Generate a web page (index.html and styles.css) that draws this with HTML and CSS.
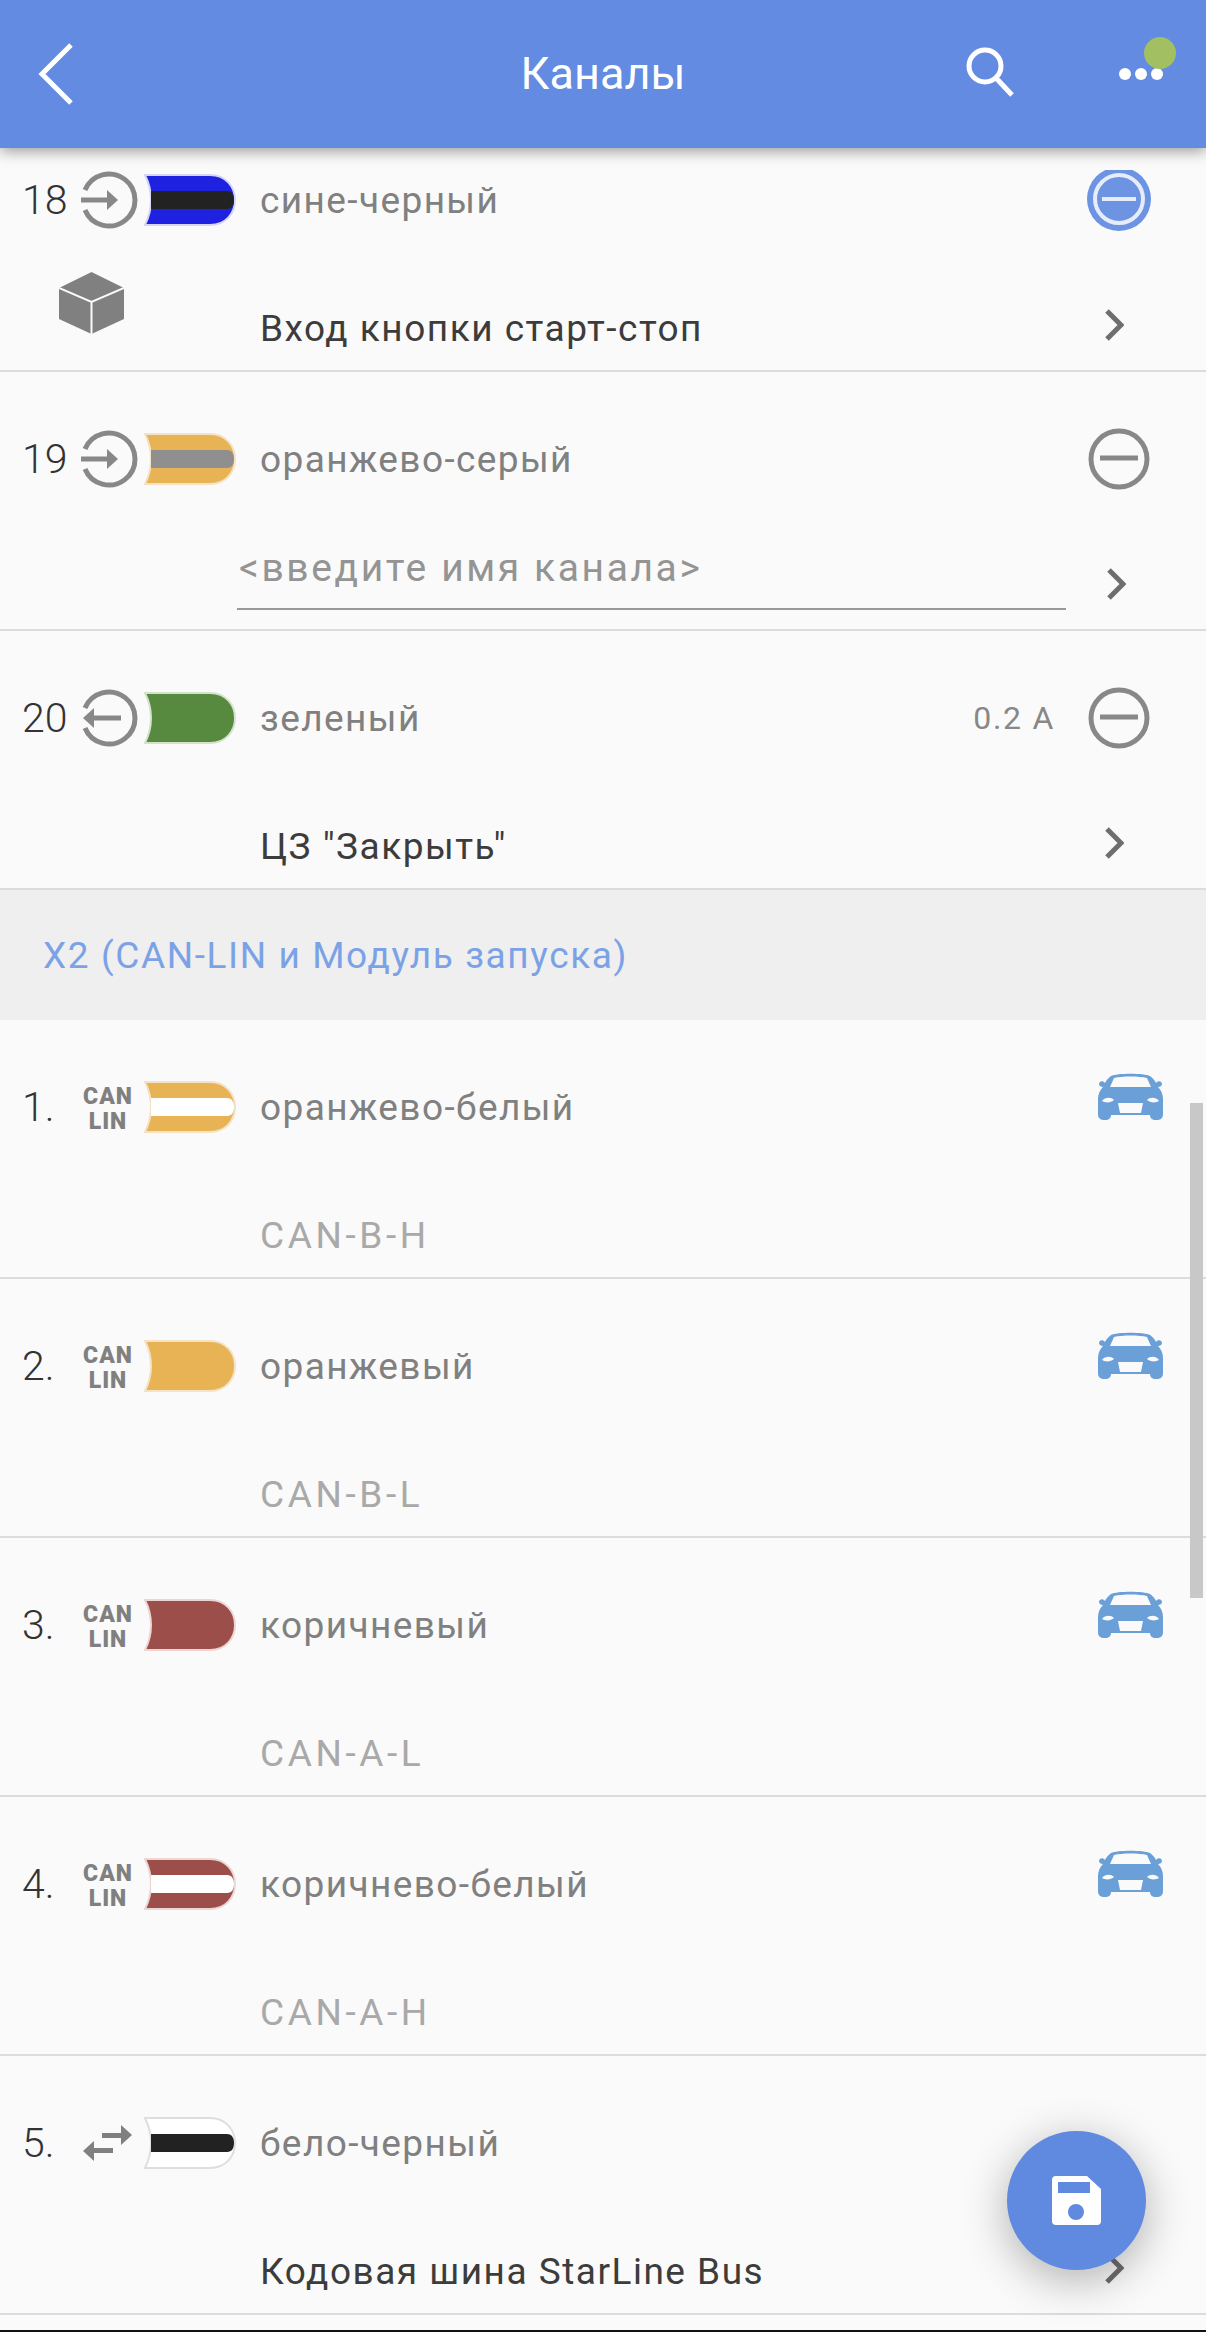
FILE: index.html
```html
<!DOCTYPE html>
<html lang="ru">
<head>
  <meta charset="UTF-8">
  <title>Каналы</title>
  <link rel="stylesheet" href="styles.css">
</head>
<body>
  <!-- shared icons -->
  <svg class="defs" aria-hidden="true">
    <symbol id="wire" viewBox="0 0 92 54">
      <path class="wire-body" d="M1 2H66C82 2 91 14 91 27C91 40 82 52 66 52H1C5 44 7 36 7 27C7 18 5 10 1 2Z"/>
    </symbol>
    <symbol id="stripe" viewBox="0 0 92 54">
      <path class="wire-stripe" d="M7 18H83C88 18 90 22 90 27C90 32 88 36 83 36H7Z"/>
    </symbol>
    <symbol id="in" viewBox="0 0 58 58">
      <path class="line" d="M4 19A26 26 0 1 1 4 39"/>
      <path class="line" d="M0 29H30"/>
      <path class="fill" d="M26 19L37 29L26 39Z"/>
    </symbol>
    <symbol id="out" viewBox="0 0 58 58">
      <path class="line" d="M4 19A26 26 0 1 1 4 39"/>
      <path class="line" d="M10 29H40"/>
      <path class="fill" d="M13 19L2 29L13 39Z"/>
    </symbol>
    <symbol id="minus" viewBox="0 0 62 62">
      <circle class="line" cx="31" cy="31" r="28"/>
      <path class="line" d="M12 30H50"/>
    </symbol>
    <symbol id="next" viewBox="0 0 20 32">
      <path class="next-line" d="M3 2L17 16L3 30"/>
    </symbol>
    <symbol id="car" viewBox="0 0 65 47">
      <path class="car-body" d="M13 3C19 0 46 0 52 3C55 5 57 8 58 10C60 7 64 8 64 11C64 13 62 14 60 14C63 17 65 21 65 26V41C65 45 63 47 58 47C54 47 52 45 52 42H13C13 45 11 47 7 47C2 47 0 45 0 41V26C0 21 2 17 5 14C3 14 1 13 1 11C1 8 5 7 7 10C8 8 10 5 13 3Z"/>
      <path class="car-glass" d="M16 5C24 3 41 3 49 5L53 14H12Z"/>
      <path class="car-glass" d="M4 28C7 24 13 24 16 27C13 30 7 30 4 28Z"/>
      <path class="car-glass" d="M61 28C58 24 52 24 49 27C52 30 58 30 61 28Z"/>
      <path class="car-glass" d="M20 30H45L43 40H22Z"/>
    </symbol>
  </svg>

  <div class="page">
    <header class="topbar">
      <div class="bar-left">
        <svg class="back" viewBox="0 0 36 62"><path d="M33 2L4 31L33 60"/></svg>
      </div>
      <div class="title">Каналы</div>
      <div class="bar-right">
        <svg class="search" viewBox="0 0 48 50"><circle cx="19" cy="19" r="16"/><path d="M30 31L46 48"/></svg>
        <div class="more">
          <span class="more-dot"></span>
          <span class="more-dot"></span>
          <span class="more-dot"></span>
        </div>
      </div>
      <span class="online"></span>
    </header>

    <main class="list">
      <div class="row row-first">
        <div class="row-top">
          <div class="num">18.</div>
          <svg class="dir"><use href="#in"/></svg>
          <svg class="wire blue-black"><use href="#wire"/><use href="#stripe"/></svg>
          <div class="color">сине-черный</div>
          <svg class="minus-on" viewBox="0 3 64 61">
            <circle class="on-bg" cx="32" cy="32" r="32"/>
            <circle class="on-ring" cx="32" cy="32" r="24"/>
            <path class="on-ring" d="M15 32H49"/>
          </svg>
        </div>
        <div class="row-bottom">
          <div class="side">
            <svg class="cube" viewBox="0 0 65 62">
              <path class="cube-body" d="M32.5 0L65 16V47L32.5 62L0 47V16Z"/>
              <path class="cube-line" d="M0 16L32.5 30L65 16M32.5 30V62"/>
            </svg>
          </div>
          <div class="name">Вход кнопки старт-стоп</div>
          <svg class="next"><use href="#next"/></svg>
        </div>
      </div>

      <div class="row">
        <div class="row-top">
          <div class="num">19.</div>
          <svg class="dir"><use href="#in"/></svg>
          <svg class="wire orange-grey"><use href="#wire"/><use href="#stripe"/></svg>
          <div class="color">оранжево-серый</div>
          <svg class="minus"><use href="#minus"/></svg>
        </div>
        <div class="row-bottom">
          <div class="side"></div>
          <input class="channel-input" type="text" placeholder="<введите имя канала>">
          <svg class="next"><use href="#next"/></svg>
        </div>
      </div>

      <div class="row">
        <div class="row-top">
          <div class="num">20.</div>
          <svg class="dir"><use href="#out"/></svg>
          <svg class="wire green"><use href="#wire"/></svg>
          <div class="color">зеленый</div>
          <div class="amps">0.2 A</div>
          <svg class="minus"><use href="#minus"/></svg>
        </div>
        <div class="row-bottom">
          <div class="side"></div>
          <div class="name">ЦЗ "Закрыть"</div>
          <svg class="next"><use href="#next"/></svg>
        </div>
      </div>

      <div class="section">X2 (CAN-LIN и Модуль запуска)</div>

      <div class="row">
        <div class="row-top">
          <div class="num">1.</div>
          <div class="bus">CAN<br>LIN</div>
          <svg class="wire orange-white"><use href="#wire"/><use href="#stripe"/></svg>
          <div class="color">оранжево-белый</div>
          <svg class="car"><use href="#car"/></svg>
        </div>
        <div class="row-bottom">
          <div class="side"></div>
          <div class="name muted">CAN-B-H</div>
        </div>
      </div>

      <div class="row">
        <div class="row-top">
          <div class="num">2.</div>
          <div class="bus">CAN<br>LIN</div>
          <svg class="wire orange"><use href="#wire"/></svg>
          <div class="color">оранжевый</div>
          <svg class="car"><use href="#car"/></svg>
        </div>
        <div class="row-bottom">
          <div class="side"></div>
          <div class="name muted">CAN-B-L</div>
        </div>
      </div>

      <div class="row">
        <div class="row-top">
          <div class="num">3.</div>
          <div class="bus">CAN<br>LIN</div>
          <svg class="wire brown"><use href="#wire"/></svg>
          <div class="color">коричневый</div>
          <svg class="car"><use href="#car"/></svg>
        </div>
        <div class="row-bottom">
          <div class="side"></div>
          <div class="name muted">CAN-A-L</div>
        </div>
      </div>

      <div class="row">
        <div class="row-top">
          <div class="num">4.</div>
          <div class="bus">CAN<br>LIN</div>
          <svg class="wire brown-white"><use href="#wire"/><use href="#stripe"/></svg>
          <div class="color">коричнево-белый</div>
          <svg class="car"><use href="#car"/></svg>
        </div>
        <div class="row-bottom">
          <div class="side"></div>
          <div class="name muted">CAN-A-H</div>
        </div>
      </div>

      <div class="row">
        <div class="row-top">
          <div class="num">5.</div>
          <svg class="swap" viewBox="0 0 50 36">
            <path d="M19 8H38V0L49 10L38 20V13H19Z"/>
            <path d="M30 23H11V16L0 26L11 36V28H30Z"/>
          </svg>
          <svg class="wire white-black"><use href="#wire"/><use href="#stripe"/></svg>
          <div class="color">бело-черный</div>
        </div>
        <div class="row-bottom">
          <div class="side"></div>
          <div class="name">Кодовая шина StarLine Bus</div>
          <svg class="next"><use href="#next"/></svg>
        </div>
      </div>
    </main>

    <div class="scrollbar"></div>

    <button class="fab">
      <svg class="save" viewBox="0 0 49 49">
        <path class="save-body" d="M4 0H35L49 13V45A4 4 0 0 1 45 49H4A4 4 0 0 1 0 45V4A4 4 0 0 1 4 0Z"/>
        <rect class="save-hole" x="6" y="6" width="32" height="11"/>
        <circle class="save-hole" cx="24" cy="36" r="8"/>
      </svg>
    </button>
  </div>
</body>
</html>
```

FILE: styles.css
```css
* {
  box-sizing: border-box;
}
body {
  margin: 0;
  background: #fafafa;
  font-family: Roboto, "Noto Sans", sans-serif;
}
.defs {
  position: absolute;
  width: 0;
  height: 0;
}
.page {
  position: relative;
  width: 1206px;
  height: 2332px;
  display: flex;
  flex-direction: column;
  overflow: hidden;
  border-bottom: 2px solid #111;
}

/* top bar */
.topbar {
  position: relative;
  z-index: 2;
  flex: none;
  height: 148px;
  background: #628be1;
  box-shadow: 0 3px 14px rgba(0,0,0,0.4);
  display: grid;
  grid-template-columns: 240px 1fr 240px;
  align-items: center;
}
.bar-left {
  padding-left: 38px;
}
.bar-right {
  display: flex;
  align-items: center;
}
.back {
  display: block;
  width: 36px;
  height: 62px;
  fill: none;
  stroke: #fff;
  stroke-width: 5;
}
.title {
  text-align: center;
  color: #fff;
  font-size: 45px;
  margin-bottom: 2px;
}
.search {
  flex: none;
  width: 48px;
  height: 50px;
  margin-right: 105px;
  margin-bottom: 4px;
  fill: none;
  stroke: #fff;
  stroke-width: 5;
}
.more {
  display: flex;
  gap: 4px;
}
.more-dot {
  width: 12px;
  height: 12px;
  border-radius: 50%;
  background: #fff;
}
.online {
  position: absolute;
  top: 37px;
  left: 1144px;
  width: 32px;
  height: 32px;
  border-radius: 50%;
  background: #a2bf62;
}

/* channel list */
.list {
  flex: 1;
  overflow: hidden;
}
.row {
  height: 259px;
  border-bottom: 2px solid #dcdcdc;
}
.row-first {
  margin-top: -35px;
}
.row-top {
  height: 174px;
  display: flex;
  align-items: center;
  padding: 0 55px 0 22px;
}
.row-bottom {
  height: 83px;
  display: flex;
  align-items: center;
  padding-right: 82px;
}
.num {
  flex: none;
  width: 46px;
  overflow: hidden;
  white-space: nowrap;
  font-size: 41px;
  font-weight: 300;
  color: #333;
}
.dir {
  flex: none;
  width: 58px;
  height: 58px;
  margin: 0 5px 0 13px;
}
.line {
  fill: none;
  stroke: #888;
  stroke-width: 5;
}
.fill {
  fill: #888;
}
.wire {
  flex: none;
  width: 92px;
  height: 54px;
}
.wire-body {
  fill: var(--c1);
  stroke: var(--edge);
  stroke-width: 2;
}
.wire-stripe {
  fill: var(--c2);
}
.blue-black { --c1: #1f21e0; --c2: #222; --edge: #d5d5f8; }
.orange-grey { --c1: #e8b355; --c2: #8f8f8f; --edge: #f3e2c4; }
.green { --c1: #57893f; --edge: #d3e3cb; }
.orange-white { --c1: #e8b355; --c2: #fff; --edge: #f3e2c4; }
.orange { --c1: #e8b355; --edge: #f3e2c4; }
.brown { --c1: #9c4e4a; --edge: #ecd5d3; }
.brown-white { --c1: #9c4e4a; --c2: #fff; --edge: #ecd5d3; }
.white-black { --c1: #fff; --c2: #222; --edge: #dedede; }
.color {
  flex: 1;
  margin-left: 24px;
  color: #808080;
  font-size: 37px;
  letter-spacing: 1.4px;
}
.amps {
  margin-right: 33px;
  color: #888;
  font-size: 32px;
  letter-spacing: 1.7px;
}
.minus {
  flex: none;
  width: 62px;
  height: 62px;
  margin-right: 1px;
}
.minus-on {
  flex: none;
  width: 64px;
  height: 61px;
}
.on-bg {
  fill: #6c94e3;
}
.on-ring {
  fill: none;
  stroke: #e6ecfa;
  stroke-width: 4;
}
.side {
  flex: none;
  width: 260px;
  align-self: flex-start;
  padding-left: 59px;
}
.cube {
  display: block;
  width: 65px;
  height: 62px;
  margin-top: -15px;
}
.cube-body {
  fill: #808080;
}
.cube-line {
  fill: none;
  stroke: #fafafa;
  stroke-width: 2;
}
.name {
  flex: 1;
  color: #3c3c3c;
  font-size: 37px;
  letter-spacing: 1.5px;
}
.muted {
  color: #a9a9a9;
  letter-spacing: 3.6px;
}
.next {
  flex: none;
  width: 20px;
  height: 32px;
  margin-bottom: 8px;
}
.next-line {
  fill: none;
  stroke: #6e6e6e;
  stroke-width: 5;
}
.channel-input {
  flex: none;
  align-self: flex-start;
  width: 829px;
  height: 64px;
  margin: 0 40px 0 -23px;
  padding: 0 0 18px 2px;
  border: none;
  border-bottom: 2px solid #999;
  background: transparent;
  font: inherit;
  font-size: 39px;
  letter-spacing: 2.6px;
  outline: none;
}
.channel-input::placeholder {
  color: #949494;
  opacity: 1;
}

/* X2 header */
.section {
  height: 130px;
  padding: 0 43px;
  background: #efefef;
  display: flex;
  align-items: center;
  color: #7ba2e6;
  font-size: 37px;
  letter-spacing: 1.6px;
}
.bus {
  flex: none;
  width: 76px;
  padding: 3px 0 0 4px;
  text-align: center;
  font-weight: 900;
  font-size: 23px;
  line-height: 25px;
  letter-spacing: 1px;
  color: #808080;
}
.car {
  flex: none;
  width: 65px;
  height: 47px;
  margin: 0 -12px 22px 0;
}
.car-body {
  fill: #6a9fd8;
}
.car-glass {
  fill: #fafafa;
}
.swap {
  flex: none;
  width: 50px;
  height: 36px;
  margin: 0 11px 0 15px;
  fill: #808080;
}

/* overlays */
.scrollbar {
  position: absolute;
  top: 1103px;
  left: 1190px;
  width: 13px;
  height: 495px;
  background: #c8c8c8;
}
.fab {
  position: absolute;
  left: 1007px;
  top: 2131px;
  width: 139px;
  height: 139px;
  padding: 0;
  border: none;
  border-radius: 50%;
  background: #5f8ae0;
  box-shadow: 0 10px 45px rgba(0,0,0,0.3);
  display: flex;
  align-items: center;
  justify-content: center;
}
.save {
  width: 49px;
  height: 49px;
}
.save-body {
  fill: #fff;
}
.save-hole {
  fill: #5f8ae0;
}
```
